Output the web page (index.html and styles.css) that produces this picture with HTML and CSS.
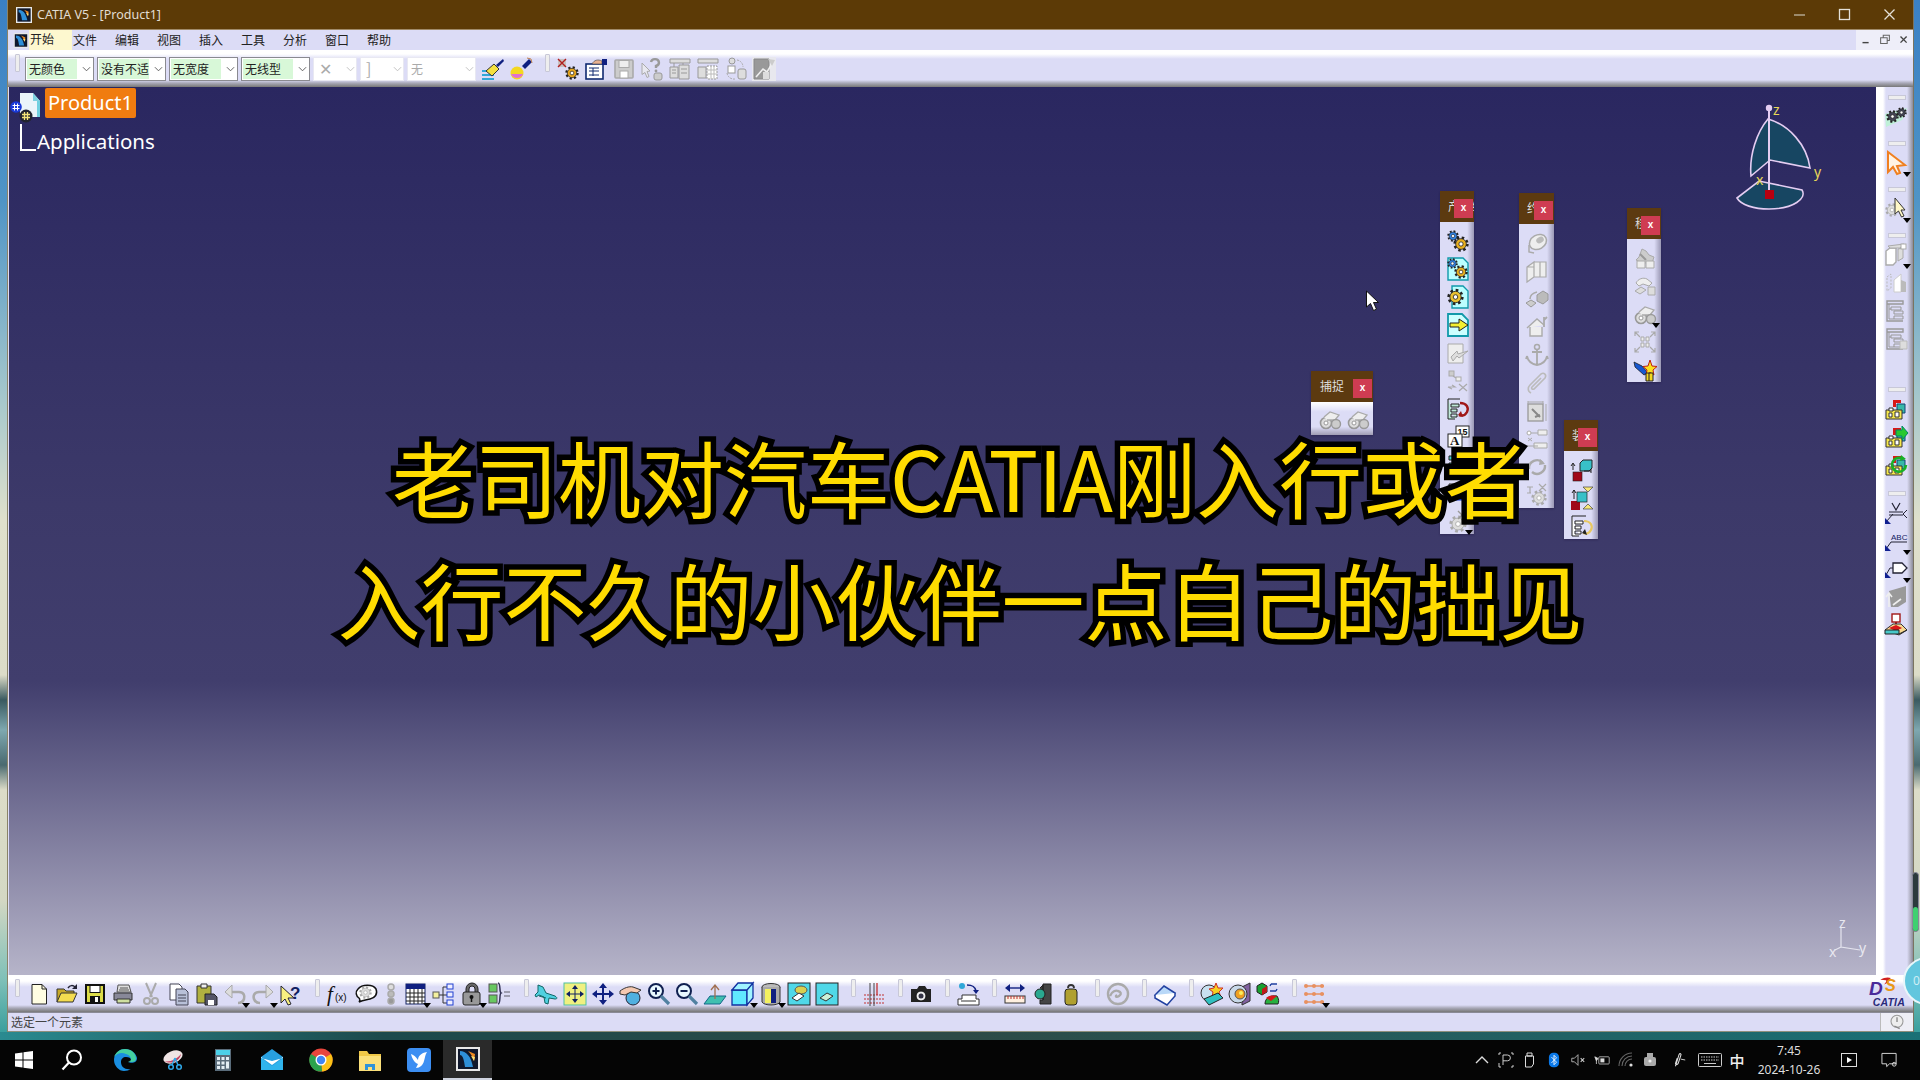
FILE: index.html
```html
<!DOCTYPE html>
<html lang="zh-CN">
<head>
<meta charset="utf-8">
<title>CATIA V5 - [Product1]</title>
<link rel="stylesheet" href="styles.css">
</head>
<body>
<svg class="defs" width="0" height="0">
  <symbol id="gear" viewBox="0 0 24 24"><circle cx="12" cy="12" r="9.5" fill="none" stroke="#222" stroke-width="4" stroke-dasharray="3.7 3.75"/><circle cx="12" cy="12" r="8" fill="currentColor" stroke="#222" stroke-width="1.2"/><circle cx="12" cy="12" r="3.2" fill="#fff" stroke="#222" stroke-width="1.2"/></symbol>
  <symbol id="ggear" viewBox="0 0 24 24"><circle cx="12" cy="12" r="9.5" fill="none" stroke="#aaa" stroke-width="4" stroke-dasharray="3.7 3.75"/><circle cx="12" cy="12" r="8" fill="#ddd" stroke="#aaa" stroke-width="1.2"/><circle cx="12" cy="12" r="3.2" fill="#fff" stroke="#aaa" stroke-width="1.2"/></symbol>
  <symbol id="cat" viewBox="0 0 24 24"><rect x="1" y="1" width="22" height="22" fill="#10182c" stroke="#e8e8e8" stroke-width="2"/><path d="M4 4c6 0 11 5 13 16H9C8 13 7 8 4 8z" fill="#2e8fd8"/><path d="M12 4l7 3-1 7c-1-4-3-7-6-10z" fill="#f08a20"/><path d="M15 9l4 1-1 4z" fill="#ffe070"/></symbol>
  <symbol id="tree" viewBox="0 0 24 24"><path d="M3 2h16v3H3zM3 5v17h16" fill="none" stroke="#999" stroke-width="1.4"/><path d="M7 8h10v3H7zM10 12h9v3h-9zM10 17h9v3h-9zM5 5v15h5M5 10h2" fill="none" stroke="#999"/></symbol>
  <symbol id="kit" viewBox="0 0 24 24"><path d="M9 3h8v3h-5v4H9z" fill="#d81818"/><path d="M13 7h8v9h-8z" fill="#38b8a8" stroke="#147"/><path d="M2 13h16v9H2z" fill="#f6e84c" stroke="#333"/><path d="M5 11h4v3H5zM5 16h3v4H5zM11 15h4v5h-4z" fill="#fff" stroke="#333"/></symbol>
  <symbol id="gbub" viewBox="0 0 24 24"><circle cx="8" cy="16" r="5.5" fill="#ddd" stroke="#999" stroke-width="1.6"/><circle cx="8" cy="16" r="2" fill="#fff" stroke="#999"/><path d="M6 10l6-5 9 3-4 5H9" fill="#eee" stroke="#aaa" stroke-width="1.3"/><circle cx="18" cy="17" r="4.5" fill="#ccc" stroke="#999" stroke-width="1.4"/></symbol>
</svg>

<div class="window">
  <header class="titlebar">
    <svg class="title-icon" viewBox="0 0 24 24"><use href="#cat"/></svg>
    <span class="title-text">CATIA V5 - [Product1]</span>
    <div class="win-btns">
      <svg viewBox="0 0 16 16"><path d="M2 8h11" stroke="#b8ae98" stroke-width="1.4"/></svg>
      <svg viewBox="0 0 16 16"><rect x="2.5" y="2.5" width="10" height="10" fill="none" stroke="#e4e0d8" stroke-width="1.3"/></svg>
      <svg viewBox="0 0 16 16"><path d="M2.5 2.5l10 10M12.5 2.5l-10 10" stroke="#e4e0d8" stroke-width="1.3"/></svg>
    </div>
  </header>

  <nav class="menubar">
    <span class="menu-start"><svg class="menu-logo" viewBox="0 0 24 24"><use href="#cat"/></svg><span class="start-label">开始</span></span>
    <span class="menu-item">文件</span><span class="menu-item">编辑</span><span class="menu-item">视图</span><span class="menu-item">插入</span><span class="menu-item">工具</span><span class="menu-item">分析</span><span class="menu-item">窗口</span><span class="menu-item">帮助</span>
    <div class="mdi-btns">
      <svg viewBox="0 0 16 16"><path d="M4 11h7" stroke="#444" stroke-width="1.6"/></svg>
      <svg viewBox="0 0 16 16"><path d="M6 5V2.5h7v6h-2.5M3 5.5h7.5V12H3z" fill="none" stroke="#666" stroke-width="1.2"/></svg>
      <svg viewBox="0 0 16 16"><path d="M4 4l7 7M11 4l-7 7" stroke="#444" stroke-width="1.6"/></svg>
    </div>
  </nav>

  <div class="toolbar top-bar">
    <i class="grip first"></i>
    <span class="combo"><span class="val">无颜色</span><svg class="chev" viewBox="0 0 10 6"><path d="M1 1l4 4 4-4" fill="none" stroke="#555"/></svg></span>
    <span class="combo"><span class="val">没有不适</span><svg class="chev" viewBox="0 0 10 6"><path d="M1 1l4 4 4-4" fill="none" stroke="#555"/></svg></span>
    <span class="combo"><span class="val">无宽度</span><svg class="chev" viewBox="0 0 10 6"><path d="M1 1l4 4 4-4" fill="none" stroke="#555"/></svg></span>
    <span class="combo"><span class="val">无线型</span><svg class="chev" viewBox="0 0 10 6"><path d="M1 1l4 4 4-4" fill="none" stroke="#555"/></svg></span>
    <span class="combo off small"><span class="val">✕</span><svg class="chev" viewBox="0 0 10 6"><path d="M1 1l4 4 4-4" fill="none" stroke="#bbb"/></svg></span>
    <span class="combo off small"><span class="val">]</span><svg class="chev" viewBox="0 0 10 6"><path d="M1 1l4 4 4-4" fill="none" stroke="#bbb"/></svg></span>
    <span class="combo off"><span class="val">无</span><svg class="chev" viewBox="0 0 10 6"><path d="M1 1l4 4 4-4" fill="none" stroke="#bbb"/></svg></span>
    <span class="b"><svg viewBox="0 0 24 24"><path d="M1 14h12M1 18h12M1 22h12" stroke="#30a8d8" stroke-width="2.2"/><path d="M5 14l8-7 5 5-7 7z" fill="#f4e040" stroke="#333"/><path d="M15 8l7-6 1 2-6 6z" fill="#102080"/></svg></span>
    <span class="b"><svg viewBox="0 0 24 24"><circle cx="8" cy="16" r="6.5" fill="#f4d820"/><path d="M2 17a6.5 6.500 0 0 0 12 0z" fill="#e070d0"/><path d="M13 9l7-7 3 3-7 7z" fill="#102080"/><path d="M18 1l4 1 1 4" fill="none" stroke="#c08050"/></svg></span>
    <i class="grip"></i>
    <span class="b"><svg viewBox="0 0 24 24"><path d="M2 2h8v8H2z" fill="#c8c0c0"/><path d="M2 2l8 8M10 2l-8 8" stroke="#b02020" stroke-width="1.4"/><use href="#gear" x="9" y="9" width="14" height="14" color="#e8a820"/></svg></span>
    <span class="b"><svg viewBox="0 0 24 24"><rect x="2" y="7" width="17" height="15" fill="#fff" stroke="#102a70" stroke-width="1.6"/><path d="M5 11h10M5 14h10M5 18h10M9 11v8" stroke="#102a70"/><path d="M8 7c2-4 6-5 10-3v3z" fill="#e8b090" stroke="#555" stroke-width=".7"/><path d="M18 2h5v6h-5z" fill="#102080"/></svg></span>
    <span class="b"><svg viewBox="0 0 24 24"><rect x="3" y="3" width="18" height="18" rx="1" fill="#ccc" stroke="#aaa" stroke-width="1.6"/><rect x="7" y="3.500" width="10" height="7" fill="#eee" stroke="#aaa"/><rect x="8" y="14" width="8" height="7" fill="#fff" stroke="#aaa"/></svg></span>
    <span class="b"><svg viewBox="0 0 24 24"><path d="M2 6l8 8-3 .5 2 5-2 1-2-5-3 2z" fill="#e8e8f0" stroke="#aaa"/><path d="M11 5a4 3.500 0 1 1 5 4v2" fill="none" stroke="#999" stroke-width="2.400"/><circle cx="16" cy="14" r="1.400" fill="#999"/><rect x="14" y="16" width="8" height="7" rx="2" fill="#ccc" stroke="#999"/></svg></span>
    <span class="b"><svg viewBox="0 0 24 24"><path d="M2 2h20v4H2zM2 10h8v11H2zM11 8h10v14H11z" fill="#ddd" stroke="#999"/><path d="M4 13h4M4 16h4M13 12h6M13 16h6" stroke="#999"/><path d="M6 6v4M15 6v2" stroke="#999"/></svg></span>
    <span class="b"><svg viewBox="0 0 24 24"><path d="M2 2h20v4H2zM2 10h8v11H2z" fill="#ddd" stroke="#999"/><path d="M11 9h10v13H11z" fill="#fff" stroke="#999" stroke-dasharray="2 1"/><path d="M15 9v13M18 9v13M11 13h10M11 17h10" stroke="#bbb"/></svg></span>
    <span class="b"><svg viewBox="0 0 24 24"><circle cx="8" cy="4" r="3" fill="#ddd" stroke="#999"/><rect x="4" y="9" width="7" height="7" fill="#fff" stroke="#999"/><rect x="14" y="12" width="8" height="10" rx="2" fill="#ddd" stroke="#999"/><path d="M13 3a7 7 0 0 1 6 7M3 16a7 7 0 0 0 8 6" fill="none" stroke="#aaa" stroke-dasharray="2 1"/></svg></span>
    <span class="b graybox"><svg viewBox="0 0 24 24"><path d="M2 2h15v20H2z" fill="#999" stroke="#888"/><path d="M4 20l7-8 4 3 6-10" fill="none" stroke="#eee" stroke-width="1.600"/><path d="M16 2l7 1-3 6z" fill="#ccc"/><rect x="11" y="15" width="6" height="7" fill="#ddd"/></svg></span>
  </div>

  <div class="main">
    <section class="viewport">
      <div class="tree">
        <div class="tree-root">
          <svg class="root-icon" viewBox="0 0 33 36"><path d="M8 2h13l7 8v16H8z" fill="#eaf4fa"/><path d="M21 2v8h7z" fill="#7fd0e0"/><path d="M25 10h3v16h-3z" fill="#70d0e0"/><circle cx="4" cy="16" r="5.800" fill="#1a3ad8"/><path d="M2.500 12.500v7M5.500 12.500v7M.5 14.500h7M.5 17.500h7" stroke="#fff"/><circle cx="14" cy="25" r="6.500" fill="#22242e"/><path d="M12.500 21v8M15.500 21v8M10 23.500h8M10 26.500h8" stroke="#f4e478" stroke-width="1.300"/></svg>
          <span class="root-label">Product1</span>
        </div>
        <div class="tree-child"><i class="branch"></i><span class="child-label">Applications</span></div>
      </div>

      <svg class="gizmo" viewBox="1730 100 95 115">
        <path d="M1769 119C1790 125 1808 145 1811 168L1771 160 1752 176C1750 155 1758 132 1769 119Z" fill="#174662" stroke="#e4cdf2" stroke-width="1.600"/>
        <path d="M1738 198L1760 181 1803 190C1808 198 1795 209 1770 209 1755 209 1742 205 1738 198Z" fill="#174662" stroke="#e4cdf2" stroke-width="1.600"/>
        <path d="M1770 108V192" stroke="#e4cdf2" stroke-width="2"/>
        <circle cx="1770" cy="108" r="3.200" fill="#e4cdf2"/>
        <rect x="1766" y="190" width="9" height="9" fill="#b80010"/>
        <text x="1774" y="115" class="giz-t">z</text><text x="1815" y="177" class="giz-t">y</text><text x="1757" y="185" class="giz-t">x</text>
      </svg>

      <svg class="axis" viewBox="1825 915 50 45">
        <path d="M1842 927V947L1861 950M1842 947L1836 950" fill="none" stroke="#e4e4ee" stroke-width="1.200"/>
        <text x="1840" y="928" class="axis-t">z</text><text x="1860" y="953" class="axis-t">y</text><text x="1830" y="957" class="axis-t">x</text>
      </svg>

      <svg class="pointer" viewBox="0 0 14 22"><path d="M1.500 1v16l4-3.500 3 7 3-1.300-3-6.700h5z" fill="#fff" stroke="#111"/></svg>

      <div class="float ft-a">
        <div class="ft-title"><span class="ft-name">捕捉</span><span class="ft-x">x</span></div>
        <div class="ft-body row">
          <span class="b"><svg viewBox="0 0 24 24"><use href="#gbub"/></svg></span>
          <span class="b"><svg viewBox="0 0 24 24"><use href="#gbub"/></svg></span>
        </div>
      </div>

      <div class="float ft-b">
        <div class="ft-title"><span class="ft-name">产品结构</span><span class="ft-x">x</span></div>
        <div class="ft-body">
          <span class="b"><svg viewBox="0 0 24 24"><use href="#gear" x="1" y="1" width="12" height="12" color="#3080e0"/><use href="#gear" x="7" y="7" width="16" height="16" color="#e8b020"/></svg></span>
          <span class="b"><svg viewBox="0 0 24 24"><path d="M2 1h15l5 5v17H2z" fill="#bff" stroke="#19a" stroke-width="1.400"/><use href="#gear" x="1" y="1" width="11" height="11" color="#3080e0"/><use href="#gear" x="8" y="8" width="14" height="14" color="#e8b020"/></svg></span>
          <span class="b"><svg viewBox="0 0 24 24"><path d="M6 1h11l5 5v17H6z" fill="#bff" stroke="#19a" stroke-width="1.400"/><use href="#gear" x="1" y="3" width="17" height="18" color="#e8c030"/></svg></span>
          <span class="b"><svg viewBox="0 0 24 24"><path d="M2 1h14l6 6v16H2z" fill="#cff" stroke="#19a" stroke-width="1.800"/><path d="M4 10h9V6l9 6-9 6v-4H4z" fill="#f4ee30" stroke="#222"/></svg></span>
          <span class="b"><svg viewBox="0 0 24 24"><path d="M2 3h15v19H2z" fill="#eee" stroke="#aaa"/><path d="M5 16l6-6 1 3 10-3-9 7-2-2-4 5z" fill="#ddd" stroke="#aaa"/></svg></span>
          <span class="b"><svg viewBox="0 0 24 24"><rect x="3" y="2" width="5" height="5" fill="#ccc" stroke="#aaa"/><rect x="10" y="8" width="5" height="4" fill="#eee" stroke="#aaa"/><path d="M7 7l3 2M2 18h7l-3-2M2 18l4 2M13 15l8 7M21 15l-8 7" fill="none" stroke="#aaa" stroke-width="1.200"/></svg></span>
          <span class="b"><svg viewBox="0 0 24 24"><path d="M2 2h12M2 2v20h7M5 7h8v3H5zM5 12h6v3H5zM5 17h6v3H5z" fill="#bfe8d8" stroke="#222"/><path d="M14 6c7 0 9 5 7 9s-5 4-8 3" fill="none" stroke="#a01818" stroke-width="2.400"/><path d="M15 14l-3 4 5 2z" fill="#a01818"/></svg></span>
          <span class="b"><svg viewBox="0 0 24 24"><rect x="10" y="1" width="13" height="11" fill="#fff" stroke="#222"/><text x="11.500" y="10" class="ic-t">15</text><rect x="2" y="9" width="14" height="13" fill="#fff" stroke="#222"/><text x="4" y="20" class="ic-b">A</text></svg></span>
          <span class="b"><svg viewBox="0 0 24 24"><path d="M3 3h10v4H3zM3 10h14v4H3zM3 17h14v4H3z" fill="#4cc" stroke="#222"/></svg></span>
          <span class="b"><svg viewBox="0 0 24 24"><path d="M3 3h10v4H3zM3 10h14v4H3z" fill="#ccd" stroke="#222"/><path d="M3 18h16" stroke="#1030c0" stroke-width="3"/></svg></span>
          <span class="b more"><svg viewBox="0 0 24 24"><use href="#ggear" x="3" y="6" width="18" height="18"/><path d="M12 2l8 8M20 2l-8 8" stroke="#999" stroke-width="1.400"/></svg></span>
        </div>
      </div>

      <div class="float ft-c">
        <div class="ft-title"><span class="ft-name">约束</span><span class="ft-x">x</span></div>
        <div class="ft-body">
          <span class="b"><svg viewBox="0 0 24 24"><ellipse cx="13" cy="11" rx="9" ry="7" fill="#eee" stroke="#aaa" stroke-width="1.500" transform="rotate(-30 13 11)"/><ellipse cx="15" cy="9" rx="4" ry="3" fill="#bbb" transform="rotate(-30 15 9)"/><path d="M4 14v7l5 1" fill="none" stroke="#aaa" stroke-width="1.500"/></svg></span>
          <span class="b"><svg viewBox="0 0 24 24"><path d="M2 8l7-5v15l-7 5zM9 3h12v15H9zM15 3v15M2 8h7" fill="#eee" stroke="#aaa" stroke-width="1.200"/></svg></span>
          <span class="b"><svg viewBox="0 0 24 24"><path d="M12 8l6-4 5 3v6l-5 4-6-3z" fill="#bbb" stroke="#999"/><path d="M1 16l5-3 5 3-5 4z" fill="#ccc" stroke="#999"/><path d="M5 12c0-4 3-6 7-7" fill="none" stroke="#aaa" stroke-width="1.600"/></svg></span>
          <span class="b"><svg viewBox="0 0 24 24"><path d="M2 13l10-9 7 6M5 12v9h12v-9" fill="#eee" stroke="#aaa" stroke-width="1.400"/><path d="M19 2v10M22 2l-3 3" stroke="#aaa" stroke-width="1.800"/></svg></span>
          <span class="b"><svg viewBox="0 0 24 24"><circle cx="12" cy="4" r="2.500" fill="none" stroke="#aaa" stroke-width="1.500"/><path d="M12 6v16M7 9h10M2 13c1 6 5 8 10 9 5-1 9-3 10-9M2 13l-1 3M22 13l1 3" fill="none" stroke="#aaa" stroke-width="1.800"/></svg></span>
          <span class="b"><svg viewBox="0 0 24 24"><path d="M6 22c-4-2-3-6-1-8L16 3c3-2 6 1 4 4L9 18c-2 1-3-1-2-2L16 7" fill="none" stroke="#bbb" stroke-width="1.600"/></svg></span>
          <span class="b"><svg viewBox="0 0 24 24"><rect x="3" y="5" width="15" height="17" fill="#ddd" stroke="#999" stroke-width="1.300"/><path d="M3 2v3M18 2v3M21 5v17M3 3h15" fill="none" stroke="#aaa"/><path d="M7 10l8 8M10 18l5-2" stroke="#888" stroke-width="2"/></svg></span>
          <span class="b"><svg viewBox="0 0 24 24"><path d="M2 6h11M2 19h11M13 3h9v5h-9zM9 16h13v5H9z" fill="#eee" stroke="#aaa"/><circle cx="4" cy="6" r="2" fill="#fff" stroke="#aaa"/><path d="M3 11l4 3M7 11l-4 3" stroke="#aaa"/></svg></span>
          <span class="b"><svg viewBox="0 0 24 24"><path d="M4 14a8 8 0 0 1 14-6" fill="none" stroke="#aaa" stroke-width="2.400"/><path d="M20 10a8 8 0 0 1-13 7" fill="none" stroke="#aaa" stroke-width="2.400"/><path d="M15 4l5 5-6 1z" fill="#aaa"/></svg></span>
          <span class="b"><svg viewBox="0 0 24 24"><use href="#ggear" x="6" y="7" width="16" height="16"/><path d="M14 1l7 7M21 1l-7 7M2 4h6M2 10h4M5 4v6" stroke="#aaa" stroke-width="1.200" fill="none"/></svg></span>
        </div>
      </div>

      <div class="float ft-d">
        <div class="ft-title"><span class="ft-name">移动</span><span class="ft-x">x</span></div>
        <div class="ft-body">
          <span class="b"><svg viewBox="0 0 24 24"><path d="M9 3l4 2 3 4 5 2-2 6H9l-6-3 3-3z" fill="#ccc" stroke="#aaa"/><path d="M4 15h8v7H4zM13 15h8v7h-8z" fill="#eee" stroke="#aaa"/><path d="M7 8l6 6" stroke="#999" stroke-width="2"/></svg></span>
          <span class="b"><svg viewBox="0 0 24 24"><path d="M3 9c2-4 7-6 11-4l5 4-3 3-6-2-4 2z" fill="#eee" stroke="#aaa"/><path d="M2 17l6-4 5 3-6 4zM15 13h7v8h-7z" fill="#ddd" stroke="#aaa"/></svg></span>
          <span class="b more"><svg viewBox="0 0 24 24"><use href="#gbub"/></svg></span>
          <span class="b"><svg viewBox="0 0 24 24"><path d="M2 2l5 5M22 2l-5 5M2 22l5-5M22 22l-5-5M2 6V2h4M22 6V2h-4M2 18v4h4M22 18v4h-4" fill="none" stroke="#aaa" stroke-width="1.200"/><path d="M8 7h3v4H8zM13 7h3v4h-3zM8 13h3v4H8zM13 13h3v4h-3z" fill="#eee" stroke="#aaa"/></svg></span>
          <span class="b"><svg viewBox="0 0 24 24"><path d="M1 4l8 4 6 7-4 2-9-8z" fill="#1858d0" stroke="#111" stroke-width=".7"/><path d="M17 2l2 6 5 .5-4 3.500 1 5-4-2.500-4 2.500 1-5-4-3.500 5-.5z" fill="#f8e020" stroke="#c02010"/><path d="M13 15h7v8h-7z" fill="#f4d820" stroke="#222"/><path d="M16 15v8" stroke="#222"/></svg></span>
        </div>
      </div>

      <div class="float ft-e">
        <div class="ft-title"><span class="ft-name">装配</span><span class="ft-x">x</span></div>
        <div class="ft-body">
          <span class="b"><svg viewBox="0 0 24 24"><rect x="3" y="14" width="9" height="9" fill="#a00818" stroke="#222" stroke-width=".6"/><path d="M10 5l3-3h9v8l-3 3h-9z" fill="#38c0c8" stroke="#222"/><path d="M14 13h7M21 11v4M3 6v6M1 8l2-3 2 3" fill="none" stroke="#222"/></svg></span>
          <span class="b"><svg viewBox="0 0 24 24"><rect x="1" y="15" width="9" height="9" fill="#a00818"/><rect x="7" y="6" width="10" height="10" fill="#38c0c8" stroke="#222" stroke-width=".7"/><path d="M13 1h10l-5 5zM13 23h10l-5-5z" fill="#f8e878" stroke="#444" stroke-width=".7"/><path d="M4 4v9M2 7l2-3 2 3" fill="none" stroke="#222"/></svg></span>
          <span class="b"><svg viewBox="0 0 24 24"><path d="M2 2h14M2 2v20h7M5 7h8v3H5zM5 12h6v3H5zM5 17h6v3H5z" fill="#fff" stroke="#222"/><path d="M14 7c7 0 9 5 7 9s-5 4-8 3" fill="none" stroke="#e8c860" stroke-width="2.200"/><path d="M15 15l-3 4 5 2z" fill="#222"/></svg></span>
        </div>
      </div>
    </section>

    <aside class="sidebar">
      <div class="vgroup first"><i class="vgrip"></i>
        <span class="b"><svg viewBox="0 0 24 24"><path d="M1 9l22-6-5 12L2 22z" fill="#bff0d8"/><use href="#gear" x="2" y="5" width="13" height="13" color="#445"/><use href="#gear" x="12" y="2" width="11" height="11" color="#445"/></svg></span>
      </div>
      <div class="vgroup"><i class="vgrip"></i>
        <span class="b more"><svg viewBox="0 0 24 24"><path d="M4 1v20l5-5 4 7 3-1-3-7 8-1z" fill="#fff4e4" stroke="#f08020" stroke-width="2"/></svg></span>
      </div>
      <div class="vgroup"><i class="vgrip"></i>
        <span class="b more"><svg viewBox="0 0 24 24"><use href="#ggear" x="1" y="6" width="14" height="14"/><path d="M11 1v16l3.500-3 3 6 2.500-1-3-6h4z" fill="#fff8c8" stroke="#333"/></svg></span>
      </div>
      <div class="vgroup"><i class="vgrip"></i>
        <span class="b more"><svg viewBox="0 0 24 24"><path d="M2 8l4-3h6v14l-3 3H2z" fill="#fff" stroke="#aaa" stroke-width="1.400"/><path d="M4 3l16-2-4 4H6zM14 6l5-1v10l-5 3z" fill="#ddd" stroke="#aaa"/><rect x="17" y="1" width="5" height="5" fill="#fff" stroke="#aaa"/></svg></span>
        <span class="b"><svg viewBox="0 0 24 24"><path d="M3 6l4-3v14l-4 3z" fill="none" stroke="#bbb" stroke-dasharray="2 1.500"/><path d="M10 9l7-6v18h-7z" fill="#fff" stroke="#ccc"/><path d="M17 9l5 2v10h-5z" fill="#bbb"/></svg></span>
        <span class="b"><svg viewBox="0 0 24 24"><use href="#tree"/></svg></span>
        <span class="b"><svg viewBox="0 0 24 24"><use href="#tree"/><path d="M16 14h7v8h-7z" fill="#ddd" stroke="#bbb"/></svg></span>
      </div>
      <div class="vgroup far"><i class="vgrip"></i>
        <span class="b"><svg viewBox="0 0 24 24"><use href="#kit"/></svg></span>
        <span class="b"><svg viewBox="0 0 24 24"><use href="#kit"/><path d="M12 5h6V1l6 7-6 7v-4h-6z" fill="#28c830" stroke="#086"/></svg></span>
        <span class="b"><svg viewBox="0 0 24 24"><use href="#kit"/><path d="M22 12a7 7 0 1 1-3-6" fill="none" stroke="#18b028" stroke-width="2.600"/><path d="M17 2l5 4-6 2z" fill="#18b028"/></svg></span>
      </div>
      <div class="vgroup near"><i class="vgrip"></i>
        <span class="b"><svg viewBox="0 0 24 24"><path d="M8 2l4 7 4-7M5 11h14M5 14h14" fill="none" stroke="#223" stroke-width="1.200"/><path d="M23 9l-4 4 4 4M9 13l-7 8" fill="none" stroke="#223"/><path d="M1 17v6h6z" fill="#102090"/></svg></span>
        <span class="b more"><svg viewBox="0 0 24 24"><text x="7" y="11" class="ic-abc">ABC</text><path d="M7 13h16M7 13l-5 7" fill="none" stroke="#223"/><path d="M1 16v6h6z" fill="#102090"/></svg></span>
        <span class="b more"><svg viewBox="0 0 24 24"><path d="M9 6h9l5 5-5 5H9z" fill="#fff" stroke="#223" stroke-width="1.300"/><path d="M9 11H6l-4 7" fill="none" stroke="#223"/><path d="M1 15v6h6z" fill="#102090"/></svg></span>
        <span class="b"><svg viewBox="0 0 24 24"><path d="M5 6l17-5v16l-8 5H7z" fill="#999"/><path d="M5 9v13M2 12l3-4 3 4M9 20l8-6" fill="none" stroke="#eee" stroke-width="1.600"/></svg></span>
        <span class="b"><svg viewBox="0 0 24 24"><rect x="8" y="1" width="8" height="8" fill="#fff" stroke="#a01818" stroke-width="1.400"/><path d="M12 9v5" stroke="#a01818" stroke-width="2"/><path d="M1 17l8-6h8l6 6-8 5z" fill="#f8d890" stroke="#333"/><path d="M5 15l7-3 6 3-6 3z" fill="#d81818"/><path d="M1 17v4h14v-4zM15 21l8-4" fill="#48c8c8" stroke="#222"/></svg></span>
      </div>
      <div class="ds-logo"><svg viewBox="0 0 40 20"><path d="M14 3c4-3 9-3 11-2l-2 3c-2 3-5 4-5 4 2-2 3-4 2-4.500z" fill="#d02020"/><text x="2" y="19" class="ds-d">D</text><text x="19" y="15" class="ds-s">S</text></svg><span class="ds-cat">CATIA</span></div>
    </aside>
  </div>

  <div class="toolbar bottom-bar">
    <i class="grip first"></i>
    <span class="b"><svg viewBox="0 0 24 24"><path d="M5 2.500h10l4.500 4.500v15H5z" fill="#fffde2" stroke="#222"/><path d="M15 2.500V7h4.500" fill="none" stroke="#222"/></svg></span>
    <span class="b"><svg viewBox="0 0 24 24"><path d="M2 20V7h7l2 2h8v3" fill="#c8a828" stroke="#333"/><path d="M2 20l4-9h16l-4 9z" fill="#f4dc50" stroke="#333"/><path d="M13 6c2-3 5-3 7-1" fill="none" stroke="#223" stroke-width="1.500"/><path d="M22 2v5h-5z" fill="#223"/></svg></span>
    <span class="b"><svg viewBox="0 0 24 24"><rect x="3" y="3" width="18" height="18" fill="#dcdc48" stroke="#111" stroke-width="2"/><rect x="7" y="3.500" width="10" height="7" fill="#fff" stroke="#111"/><rect x="7" y="14" width="10" height="7" fill="#111"/><rect x="12" y="15" width="3" height="5" fill="#fff"/></svg></span>
    <span class="b"><svg viewBox="0 0 24 24"><path d="M7 3h11l2 7H6z" fill="#ddd" stroke="#555"/><path d="M3 11h18v7H3z" fill="#889" stroke="#333"/><path d="M6 17h13v4H6z" fill="#cfe0a0" stroke="#333"/><path d="M9 6h8M8 8h10" stroke="#555"/></svg></span>
    <span class="b"><svg viewBox="0 0 24 24"><path d="M7 1l6 14M17 1L11 15" stroke="#aaa" stroke-width="2"/><circle cx="8" cy="19" r="3" fill="none" stroke="#aaa" stroke-width="2"/><circle cx="16" cy="19" r="3" fill="none" stroke="#aaa" stroke-width="2"/></svg></span>
    <span class="b"><svg viewBox="0 0 24 24"><path d="M3 2h9l3 3v13H3z" fill="#fff" stroke="#445"/><path d="M9 7h9l3 3v13H9z" fill="#b8c0d8" stroke="#445"/><path d="M11 13h8M11 16h8M11 19h8" stroke="#445"/></svg></span>
    <span class="b"><svg viewBox="0 0 24 24"><path d="M2 4h14v17H2z" fill="#b0b040" stroke="#333"/><path d="M6 2h6v4H6z" fill="#eee" stroke="#333"/><path d="M10 12h9l3 3v8H10z" fill="#556" stroke="#222"/><path d="M13 18h6v5h-6z" fill="#fff"/></svg></span>
    <span class="b more"><svg viewBox="0 0 24 24"><path d="M6 10h10c5 0 6 4 5 7s-4 4-6 4" fill="none" stroke="#aaa" stroke-width="2.600"/><path d="M2 10l7-7v13z" fill="#ddd" stroke="#aaa"/></svg></span>
    <span class="b more"><svg viewBox="0 0 24 24"><path d="M18 10H8c-5 0-6 4-5 7s4 4 6 4" fill="none" stroke="#aaa" stroke-width="2.600"/><path d="M22 10l-7-7v13z" fill="#ddd" stroke="#aaa"/></svg></span>
    <span class="b"><svg viewBox="0 0 24 24"><path d="M2 4v17l4-4 3 6 3-1-3-6h6z" fill="#f8f080" stroke="#223"/><text x="11" y="17" class="ic-q">?</text></svg></span>
    <i class="grip"></i>
    <span class="b"><svg viewBox="0 0 24 24"><text x="1" y="19" class="ic-f">f</text><text x="9" y="19" class="ic-fx">(x)</text></svg></span>
    <span class="b"><svg viewBox="0 0 24 24"><path d="M5 20c1-1 1-3 0-4-3-2-4-6-1-9 4-5 15-5 18 0 2 5-1 9-6 10-4 1-7 1-11 3z" fill="#fff" stroke="#111" stroke-width="1.500"/><use href="#ggear" x="5" y="4" width="13" height="13"/></svg></span>
    <span class="b narrow"><svg viewBox="0 0 24 24"><circle cx="12" cy="5" r="3" fill="#ddd" stroke="#aaa" stroke-width="1.500"/><circle cx="12" cy="12" r="3" fill="#bbb" stroke="#aaa" stroke-width="1.500"/><circle cx="12" cy="19" r="3" fill="#999" stroke="#aaa" stroke-width="1.500"/></svg></span>
    <span class="b more"><svg viewBox="0 0 24 24"><rect x="2" y="2" width="19" height="20" fill="#fff" stroke="#102060"/><rect x="2" y="2" width="19" height="5" fill="#102080"/><path d="M6 7v15M10 7v15M14 7v15M18 7v15M2 11h19M2 15h19M2 19h19" stroke="#222"/></svg></span>
    <span class="b"><svg viewBox="0 0 24 24"><path d="M7 13h4M11 5v16M11 5h4M11 13h4M11 21h4" fill="none" stroke="#333"/><rect x="1" y="10" width="6" height="6" fill="#f4f0a0" stroke="#555"/><rect x="15" y="2" width="6" height="5" fill="#eef" stroke="#2040d0"/><rect x="15" y="10" width="6" height="5" fill="#eef" stroke="#2040d0"/><rect x="15" y="18" width="6" height="5" fill="#eef" stroke="#2040d0"/></svg></span>
    <span class="b more"><svg viewBox="0 0 24 24"><path d="M6 11V7a6 6 0 0 1 12 0v4h-3V7a3 3 0 0 0-6 0v4z" fill="#666" stroke="#222"/><rect x="3" y="10" width="17" height="13" rx="2" fill="#999" stroke="#222"/><circle cx="11.500" cy="15" r="2" fill="#111"/><path d="M11.500 15v5" stroke="#111" stroke-width="1.500"/></svg></span>
    <span class="b"><svg viewBox="0 0 24 24"><rect x="1" y="2" width="8" height="8" fill="#68c860" stroke="#555"/><rect x="1" y="13" width="8" height="8" fill="#68c860" stroke="#555"/><path d="M10 1c3 0 1 9 3 10-2 1 0 11-3 11" fill="none" stroke="#335" stroke-width="1.500"/><path d="M16 10h6M16 14h6" stroke="#889" stroke-width="1.500"/></svg></span>
    <i class="grip"></i>
    <span class="b"><svg viewBox="0 0 24 24"><path d="M3 3l5 2 3 6 9 3c3 2 2 3 0 3l-6-1-1 6-3-1-1-6-5-2-3 2-1-2 3-3z" fill="#50d0e0" stroke="#166"/><path d="M4 14l7 2" stroke="#166"/></svg></span>
    <span class="b"><svg viewBox="0 0 24 24"><rect x="1" y="1" width="22" height="22" fill="#f0f080" stroke="#50c0a0"/><path d="M12 3l3 4H9zM12 21l3-4H9zM3 12l4-3v6zM21 12l-4-3v6z" fill="#102060"/><path d="M12 6v12M6 12h12" stroke="#102060"/></svg></span>
    <span class="b"><svg viewBox="0 0 24 24"><path d="M12 1l4 5h-8zM12 23l4-5h-8zM1 12l5-4v8zM23 12l-5-4v8z" fill="#102080"/><path d="M12 5v14M5 12h14" stroke="#102080" stroke-width="2"/></svg></span>
    <span class="b"><svg viewBox="0 0 24 24"><circle cx="14" cy="16" r="7" fill="#50b0e0" stroke="#223"/><path d="M1 9c4-3 9-5 13-4l8 3-4 3-6-1-6 3-5-1z" fill="#f4c8b0" stroke="#333"/></svg></span>
    <span class="b"><svg viewBox="0 0 24 24"><circle cx="9" cy="9" r="7" fill="#e8f8ff" stroke="#102050" stroke-width="2"/><path d="M5.500 9h7M9 5.500v7" stroke="#102050" stroke-width="2"/><path d="M14 14l8 8" stroke="#5080a0" stroke-width="3.200"/></svg></span>
    <span class="b"><svg viewBox="0 0 24 24"><circle cx="9" cy="9" r="7" fill="#e8f8ff" stroke="#102050" stroke-width="2"/><path d="M5.500 9h7" stroke="#102050" stroke-width="2"/><path d="M14 14l8 8" stroke="#5080a0" stroke-width="3.200"/></svg></span>
    <span class="b"><svg viewBox="0 0 24 24"><path d="M1 22l6-8h16l-6 8z" fill="#40c0b0" stroke="#168"/><path d="M12 17V4M8 8l4-5 4 5" fill="none" stroke="#a07050" stroke-width="1.300"/></svg></span>
    <span class="b more"><svg viewBox="0 0 24 24"><path d="M1 8h15v15H1z" fill="#60e8ff" stroke="#1030a0" stroke-width="1.300"/><path d="M1 8l6-7h15L16 8zM16 8l6-7v15l-6 7z" fill="#a0f4ff" stroke="#1030a0" stroke-width="1.300"/></svg></span>
    <span class="b more"><svg viewBox="0 0 24 24"><ellipse cx="12" cy="5" rx="9" ry="3.500" fill="#bbb" stroke="#333"/><path d="M3 5v15c2 4 16 4 18 0V5" fill="#aaa" stroke="#333"/><rect x="6" y="7" width="6" height="14" fill="#f4f060"/><rect x="12" y="7" width="5" height="14" fill="#102080"/></svg></span>
    <span class="b"><svg viewBox="0 0 24 24"><rect x="1" y="1" width="22" height="22" fill="#50d8e8" stroke="#222"/><ellipse cx="14" cy="8" rx="6" ry="4" fill="#d8d050" stroke="#555"/><path d="M5 16l7-5 5 3-7 5z" fill="#fff" stroke="#333"/></svg></span>
    <span class="b"><svg viewBox="0 0 24 24"><rect x="1" y="1" width="22" height="22" fill="#50d8e8" stroke="#222"/><path d="M5 16l7-5 6 3-7 5z" fill="#ccf0d8" stroke="#333"/></svg></span>
    <i class="grip"></i>
    <span class="b"><svg viewBox="0 0 24 24"><path d="M2 13h21M2 17h21M2 21h21" stroke="#c03030" stroke-dasharray="2 1"/><path d="M8 1v23M12 1v23" stroke="#444"/><path d="M15 1v12" stroke="#c02020" stroke-width="1.200"/></svg></span>
    <i class="grip"></i>
    <span class="b"><svg viewBox="0 0 24 24"><path d="M2 7h6l2-3h6l2 3h4v13H2z" fill="#222"/><circle cx="12" cy="14" r="5" fill="#eee" stroke="#111"/><circle cx="12" cy="14" r="2.500" fill="#334"/></svg></span>
    <i class="grip"></i>
    <span class="b"><svg viewBox="0 0 24 24"><circle cx="6" cy="4" r="3" fill="#30a8d8"/><path d="M11 3c5 0 8 1 9 6" fill="none" stroke="#102080" stroke-width="1.600"/><path d="M17 8h6l-3 4z" fill="#102080"/><path d="M6 13h14v4h3v6H2v-6h4z" fill="#fff" stroke="#333"/><path d="M5 19h15" stroke="#333"/></svg></span>
    <i class="grip"></i>
    <span class="b"><svg viewBox="0 0 24 24"><path d="M5 6h14" stroke="#102080" stroke-width="1.400"/><path d="M2 6l5-4v8zM22 6l-5-4v8z" fill="#102080"/><rect x="2" y="14" width="20" height="7" fill="#fff0e0" stroke="#333"/><path d="M5 14v3M8 14v3M11 14v3M14 14v3M17 14v3M20 14v3" stroke="#c03030"/></svg></span>
    <span class="b"><svg viewBox="0 0 24 24"><path d="M12 2h8v20H9v-4h3zM9 6l3-3v15" fill="#444" stroke="#222"/><circle cx="9" cy="12" r="5" fill="#2aa890" stroke="#222"/></svg></span>
    <span class="b"><svg viewBox="0 0 24 24"><path d="M9 6a3 3 0 1 1 6 0" fill="none" stroke="#333" stroke-width="1.800"/><rect x="6" y="7" width="12" height="16" rx="3" fill="#b0a030" stroke="#222"/></svg></span>
    <i class="grip"></i>
    <span class="b"><svg viewBox="0 0 24 24"><circle cx="12" cy="12" r="10" fill="none" stroke="#aaa" stroke-width="2.400"/><path d="M4 14c2-5 6-6 8-5 3 1 4 3 1 5s-4 0-2-1" fill="none" stroke="#aaa" stroke-width="2.400"/></svg></span>
    <i class="grip"></i>
    <span class="b"><svg viewBox="0 0 24 24"><path d="M2 13l9-9 11 7-8 9z" fill="#b8d8f8" stroke="#2040a0" stroke-width="1.500"/><path d="M2 13v3l12 7 8-9v-3" fill="#fff" stroke="#2040a0" stroke-width="1.500"/></svg></span>
    <i class="grip"></i>
    <span class="b"><svg viewBox="0 0 24 24"><circle cx="9" cy="11" r="8" fill="#c8e0f0" stroke="#333"/><path d="M16 1l2 5 5 0-4 4 2 5-5-3-4 3 1-5-4-3 5-1z" fill="#f8d020" stroke="#d03020"/><path d="M4 17l14-6 5 5-14 7z" fill="#30c0c0" stroke="#222"/></svg></span>
    <span class="b"><svg viewBox="0 0 24 24"><path d="M14 5l8-4v18l-8 4z" fill="#8060a0" stroke="#333"/><circle cx="10" cy="12" r="9" fill="#c8d8e8" stroke="#333"/><circle cx="12" cy="12" r="5" fill="#f0a020" stroke="#555"/><circle cx="13" cy="11" r="2" fill="#f8f060"/></svg></span>
    <span class="b"><svg viewBox="0 0 24 24"><path d="M1 4l5-3 5 3v6l-5 3-5-3z" fill="#18a030" stroke="#222"/><path d="M6 7l5-3v6l-5 3z" fill="#c01818"/><path d="M15 2h6M20 9h-6M15 2l-1 2M20 9l1-2" stroke="#2040a0" stroke-width="1.400"/><path d="M9 22c0-6 5-9 12-8 2 3 2 6 1 8z" fill="#28b040" stroke="#222"/><path d="M10 16c3-3 7-3 11-2l-6 5z" fill="#d81818"/></svg></span>
    <i class="grip"></i>
    <span class="b more"><svg viewBox="0 0 24 24"><g fill="#e89060"><circle cx="3" cy="4" r="2"/><circle cx="11" cy="4" r="2"/><circle cx="19" cy="4" r="2"/><circle cx="3" cy="12" r="2"/><circle cx="11" cy="12" r="2"/><circle cx="19" cy="12" r="2"/><circle cx="3" cy="20" r="2"/><circle cx="11" cy="20" r="2"/><circle cx="19" cy="20" r="2"/></g><path d="M3 4h18M3 12h18M3 20h18" stroke="#e89060" stroke-width="1.300"/></svg></span>
  </div>

  <footer class="status">
    <span class="status-text">选定一个元素</span>
    <span class="status-box"><svg viewBox="0 0 24 24"><circle cx="12" cy="11" r="9" fill="#eee" stroke="#999" stroke-width="1.600"/><path d="M12 5v7M8 18l8 4" stroke="#888" stroke-width="2"/></svg></span>
  </footer>
</div>

<div class="desk-gap"></div>

<div class="taskbar">
  <span class="tk first"><svg viewBox="0 0 24 24"><path d="M3 5.500l7.500-1v7H3zM11.500 4.300L21 3v8.500h-9.500zM3 12.500h7.500v7l-7.500-1zM11.500 12.500H21V21l-9.500-1.300z" fill="#fff"/></svg></span>
  <span class="tk first"><svg viewBox="0 0 24 24"><circle cx="14" cy="9.500" r="7" fill="none" stroke="#fff" stroke-width="2"/><path d="M9 14.500L2.500 21.500" stroke="#fff" stroke-width="2.200"/></svg></span>
  <span class="tk gapl"><svg viewBox="0 0 24 24"><path d="M12 1a11 11 0 0 0-11 11c0 6 5 11 10 11 3 0 5-1 7-2-6 1-10-2-10-7 0-3 2-5 5-5s5 1 5 3c0 1-1 2-3 2 2 1 9 2 9-4C23 5 18 1 12 1z" fill="#1a8ee0"/><path d="M12 1C7 1 3 4 1 9c3-4 8-5 12-3 4 1 5 4 5 5 0 2-1 2-3 2 3 2 8 1 8-2C23 5 18 1 12 1z" fill="#44d0a0"/></svg></span>
  <span class="tk"><svg viewBox="0 0 24 24"><ellipse cx="11" cy="9" rx="10" ry="6" fill="#f0e4e4" transform="rotate(-22 11 9)"/><path d="M2 13c5 2 13-2 17-7-1 7-10 11-17 7z" fill="#c04060"/><circle cx="9" cy="19" r="2.300" fill="none" stroke="#30a8e8" stroke-width="1.500"/><circle cx="17" cy="19" r="2.300" fill="none" stroke="#30a8e8" stroke-width="1.500"/><path d="M10 17l3-7M16 17l-3-7" stroke="#30a8e8" stroke-width="1.500"/></svg></span>
  <span class="tk"><svg viewBox="0 0 24 24"><rect x="4" y="1" width="16" height="22" fill="#5a6c7a"/><rect x="5" y="2" width="14" height="5" fill="#4cd0e8"/><path d="M6 9h3v3H6zM10.500 9h3v3h-3zM15 9h3v3h-3zM6 13.500h3v3H6zM10.500 13.500h3v3h-3zM15 13.500h3v7h-3zM6 18h3v3H6zM10.500 18h3v3h-3z" fill="#e4eef4"/></svg></span>
  <span class="tk"><svg viewBox="0 0 24 24"><path d="M1 9L12 1l11 8v13H1z" fill="#28a0e0"/><path d="M1 9l11 8 11-8v1L12 13 1 10z" fill="#fff"/><path d="M1 22V10l8 6 3 2 3-2 8-6v12z" fill="#30b4ec"/></svg></span>
  <span class="tk"><svg viewBox="0 0 24 24"><circle cx="12" cy="12" r="11.500" fill="#e8453c"/><path d="M12 12L22 6a11.500 11.500 0 0 1-9 17.500z" fill="#fbc116"/><path d="M12 12l1 11.500A11.500 11.500 0 0 1 2 6z" fill="#2ba24c"/><circle cx="12" cy="12" r="5.500" fill="#fff"/><circle cx="12" cy="12" r="4.200" fill="#3f86f4"/></svg></span>
  <span class="tk"><svg viewBox="0 0 24 24"><path d="M1 3h8l2 3h12v17H1z" fill="#f0c848"/><path d="M1 8h22v15H1z" fill="#fbe07a"/><path d="M7 22v-6h10v6h-3v-3h-4v3z" fill="#2f93d8"/></svg></span>
  <span class="tk"><svg viewBox="0 0 24 24"><rect x="0" y="0" width="24" height="24" rx="4" fill="#3c8ef2"/><path d="M4 6c3 1 5 3 7 6 0-4 3-7 9-8-2 3-2 6-3 9-1 4-4 7-8 7l2-4C8 15 5 11 4 6z" fill="#fff"/></svg></span>
  <span class="tk active"><svg viewBox="0 0 24 24"><use href="#cat"/></svg></span>

  <div class="tray">
    <span class="t"><svg viewBox="0 0 16 16"><path d="M2 11l6-6 6 6" fill="none" stroke="#ddd" stroke-width="1.400"/></svg></span>
    <span class="t"><svg viewBox="0 0 16 16"><path d="M5 13V3h4.500a2.800 2.800 0 0 1 0 5.800H5M1 3V1h2M15 3V1h-2M1 11v4h2M15 13v2h-2" fill="none" stroke="#ccc"/></svg></span>
    <span class="t"><svg viewBox="0 0 16 16"><path d="M5 1h5v3H5zM3.500 4h8v8l-2 3h-6z" fill="none" stroke="#ddd"/></svg></span>
    <span class="t"><svg viewBox="0 0 16 22"><rect x="1" y="1" width="14" height="20" rx="6" fill="#0a78e8"/><path d="M4.500 7l7 7-3.500 3.500v-13L11.500 8l-7 7" fill="none" stroke="#fff" stroke-width="1.200"/></svg></span>
    <span class="t"><svg viewBox="0 0 18 16"><path d="M2 6h3l4-4v12l-4-4H2z" fill="none" stroke="#bbb"/><path d="M12 6l4 4M16 6l-4 4" stroke="#ccc" stroke-width="1.200"/></svg></span>
    <span class="t"><svg viewBox="0 0 20 16"><rect x="6" y="4" width="13" height="9" rx="1" fill="none" stroke="#ccc"/><rect x="8" y="6" width="5" height="5" fill="#ddd"/><path d="M1 4l4 2-2 3zM3 7v6" stroke="#ddd" fill="#ddd"/></svg></span>
    <span class="t"><svg viewBox="0 0 16 16"><path d="M1 14A13 13 0 0 1 14 1M4 14a10 10 0 0 1 10-10M7 14a7 7 0 0 1 7-7" fill="none" stroke="#666" stroke-width="1.100"/><circle cx="13" cy="13" r="1.600" fill="#ddd"/></svg></span>
    <span class="t"><svg viewBox="0 0 16 16"><path d="M5 1h6v4H5z" fill="#aaa"/><rect x="2" y="5" width="12" height="9" rx="2" fill="#aaa"/><circle cx="8" cy="9" r="1.600" fill="#eee"/></svg></span>
    <span class="t w-pen"><svg viewBox="0 0 18 18"><path d="M5 16l4-13c1-2 3-1 2 1L8 13c-1 2-3 1-3 0l2-6" fill="none" stroke="#ddd" stroke-width="1.200"/><path d="M11 8l5 1" stroke="#ddd"/></svg></span>
    <span class="t w-key"><svg class="kbd" viewBox="0 0 24 14"><rect x=".5" y=".5" width="23" height="13" rx="1" fill="none" stroke="#ccc"/><path d="M3 4h18M3 7h18" stroke="#ccc" stroke-dasharray="1.500 1"/><path d="M6 10.500h12" stroke="#ccc"/></svg></span>
    <span class="t w-zh">中</span>
    <span class="clock"><span>7:45</span><span>2024-10-26</span></span>
    <span class="t w-vid"><svg viewBox="0 0 16 16"><rect x=".5" y="1.500" width="15" height="13" fill="none" stroke="#ddd"/><path d="M6 5l5 3-5 3z" fill="#fff"/></svg></span>
    <span class="t w-not"><svg class="note" viewBox="0 0 18 18"><path d="M1 1.500h15v11H9l-3 3v-3H1z" fill="none" stroke="#ddd"/><circle cx="14" cy="13" r="2" fill="none" stroke="#ddd"/></svg></span>
  </div>
</div>

<div class="circle-badge"><span>0</span></div>
<div class="scroll-track"><div class="green-mark"></div></div>

<div class="caption">
  <p>老司机对汽车CATIA刚入行或者</p>
  <p>入行不久的小伙伴一点自己的拙见</p>
</div>
</body>
</html>
```

FILE: styles.css
```css
* { box-sizing: border-box; }
html, body { margin: 0; padding: 0; }
body {
  width: 1920px; height: 1080px; overflow: hidden; position: relative;
  display: flex; flex-direction: column;
  font-family: "Noto Sans CJK SC", "Noto Sans", sans-serif;
  background: linear-gradient(180deg, #3a80c4 0, #4f94c6 200px, #a6c8cc 400px, #dfe0cc 520px, #dcdcc8 675px, #3a5a60 700px, #7ea8b0 730px, #4a6a70 765px, #dcdcc8 790px, #d4d8c4 900px, #7ec0b8 980px, #2f9a9a 1040px);
}
.defs { position: absolute; }
i { display: block; font-style: normal; }

.window {
  margin-left: 8px; width: 1905px; height: 1032px; flex: none;
  display: flex; flex-direction: column;
  background: #dcdcf6;
  box-shadow: -1px 0 0 #8a8468, 1px 0 0 #7a7460, 0 1px 0 #6e6a58;
}
.desk-gap { height: 8px; flex: none; background: linear-gradient(90deg, #2a8a90, #1c4a4c 20%, #2d4a46 50%, #1a7076 100%); }

.titlebar {
  height: 30px; flex: none; display: flex; align-items: center; padding-left: 8px;
  background: #5c3a06; color: #e2ddd2; border-bottom: 1px solid #a08a68;
}
.title-icon { width: 16px; height: 16px; }
.title-text { margin-left: 5px; font: 12.500px "Noto Sans", sans-serif; white-space: nowrap; }
.win-btns { margin-left: auto; display: flex; align-items: center; gap: 29px; margin-right: 15px; }
.win-btns svg { width: 16px; height: 16px; display: block; }

.menubar {
  height: 20px; flex: none; display: flex; align-items: center; background: #dcdcf6;
  font-size: 12px; color: #222;
}
.menu-start { display: flex; align-items: center; height: 20px; margin-left: 5px; }
.menu-logo { width: 16px; height: 15px; flex: none; }
.start-label { width: 43px; height: 20px; background: #fdf8cf; line-height: 18px; padding-left: 1px; }
.menu-item { width: 42px; padding-left: 1px; line-height: 18px; }
.mdi-btns { margin-left: auto; width: 57px; height: 20px; background: #eeeef9; display: flex; align-items: center; justify-content: space-around; }
.mdi-btns svg { width: 14px; height: 14px; }

.toolbar {
  height: 37px; flex: none; display: flex; align-items: center;
  background: linear-gradient(180deg, #fff 0, #fff 4px, #dcdcf6 9px, #dcdcf6 30px, #a9a9b8 33px, #777 37px);
}
.top-bar { padding-left: 7px; }
.bottom-bar {
  padding-left: 7px;
  background: linear-gradient(180deg, #fff 0, #fff 6px, #dcdcf6 12px, #dcdcf6 30px, #a9a9b8 33px, #777 37px);
}
.grip {
  width: 19px; height: 27px; flex: none; position: relative; align-self: flex-start; margin-top: 4px;
}
.grip::before { content: ""; position: absolute; left: 10px; top: 0; width: 3px; height: 16px; background: #eee; border: 1px solid #c8c8d8; border-radius: 1px; }
.grip.first { width: 10px; }
.grip.first::before { left: 0; }

.combo {
  width: 69px; height: 24px; flex: none; margin-right: 3px; display: flex; align-items: center;
  background: #fff; border: 1px solid #8a8a90; font-size: 12px; color: #222; padding: 1px;
}
.combo .val { background: #d8f8d8; width: 50px; height: 20px; line-height: 19px; padding-left: 2px; white-space: nowrap; overflow: hidden; flex: none; }
.chev { width: 9px; height: 6px; margin-left: 5px; flex: none; }
.combo.off { border-color: #e8e8f2; color: #aaa; }
.combo.off .val { background: none; width: 30px; }
.combo.off .chev { margin-left: 26px; }
.combo.small { width: 44px; }
.combo.small .val { width: 24px; padding-left: 4px; font-size: 16px; }
.combo.small .chev { margin-left: 7px; }

.b { width: 28px; height: 28px; flex: none; display: flex; align-items: center; justify-content: center; position: relative; }
.b svg { width: 24px; height: 24px; display: block; overflow: visible; flex: none; }
.b.narrow { width: 22px; }
.b.more::after { content: ""; position: absolute; right: -1px; bottom: 0; border: 4px solid transparent; border-top: 5px solid #000; border-bottom: 0; }
.graybox svg { background: #e8e8ee; }

.main { flex: 1; display: flex; min-height: 0; }
.viewport {
  flex: 1; position: relative; overflow: hidden; border-left: 1px solid #dcdcf6;
  background: linear-gradient(180deg, #2a2760 0%, #3c3969 47%, #413e6d 67%, #b6b4c9 100%);
}
.tree { position: absolute; left: 3px; top: 1px; color: #fff; font-family: "Noto Sans", sans-serif; }
.tree-root { display: flex; align-items: flex-start; }
.root-icon { width: 33px; height: 36px; flex: none; margin-top: 3px; overflow: visible; }
.root-label { background: #f07c10; border-radius: 2px; height: 30px; line-height: 30px; padding: 0 3px; font-size: 20px; white-space: nowrap; }
.tree-child { display: flex; align-items: flex-end; height: 30px; margin-left: 8px; margin-top: -1px; font-size: 20.500px; }
.branch { width: 16px; height: 27px; border-left: 2px solid #fff; border-bottom: 2px solid #fff; margin-bottom: 5px; flex: none; }
.child-label { margin-left: 1px; line-height: 30px; height: 30px; }

.gizmo { position: absolute; left: 1720px; top: 13px; width: 95px; height: 115px; }
.giz-t { fill: #e8d858; font: 14px "Noto Sans", sans-serif; }
.axis { position: absolute; left: 1815px; top: 828px; width: 50px; height: 45px; overflow: visible; }
.axis-t { fill: #e8e8f0; font: 14px "Noto Sans", sans-serif; }
.pointer { position: absolute; left: 1356px; top: 203px; width: 14px; height: 22px; }

.float { position: absolute; box-shadow: 0 1px 2px rgba(30,20,60,.4); }
.ft-title { height: 31px; background: #5c3a10; position: relative; overflow: hidden; color: #ddd; font-size: 12px; line-height: 30px; padding-left: 8px; white-space: nowrap; }
.ft-x { position: absolute; right: 1px; top: 8px; width: 19px; height: 19px; background: #cf3c52; color: #fff; font: bold 10px/18px "Liberation Sans", sans-serif; text-align: center; }
.ft-body { display: flex; flex-direction: column; padding: 5px 0 2px 4px; background: linear-gradient(90deg, #dcdcf6 0, #dcdcf6 80%, #9a98b4 100%); }
.ft-body.row { flex-direction: row; background: linear-gradient(180deg, #fff 0, #dcdcf6 30%, #dcdcf6 75%, #a09eb4 100%); padding: 3px 0 2px 5px; height: 33px; }
.ft-a { left: 1302px; top: 284px; width: 62px; }
.ft-a .ft-title { padding-left: 9px; }
.ft-b { left: 1431px; top: 104px; width: 34px; height: 343px; }
.ft-b .ft-body { height: 312px; }
.ft-c { left: 1510px; top: 106px; width: 35px; height: 315px; }
.ft-c .ft-body { height: 284px; }
.ft-d { left: 1618px; top: 121px; width: 34px; height: 174px; }
.ft-d .ft-body { height: 143px; }
.ft-e { left: 1555px; top: 333px; width: 34px; height: 119px; }
.ft-e .ft-body { height: 88px; }
.ic-t { font: bold 9px "Liberation Sans", sans-serif; fill: #111; }
.ic-b { font: bold 13px "Liberation Serif", serif; fill: #111; }
.ic-abc { font: 8px "Liberation Sans", sans-serif; fill: #102060; }
.ic-q { font: bold 17px "Liberation Sans", sans-serif; fill: #102060; }
.ic-f { font: italic 21px "Liberation Serif", serif; fill: #111; }
.ic-fx { font: 10px "Liberation Sans", sans-serif; fill: #111; }

.sidebar {
  width: 37px; flex: none; position: relative; padding: 2px 0 0 6px;
  background: linear-gradient(90deg, #fff 0, #fff 7px, #dcdcf6 10px, #dcdcf6 31px, #a8a8b8 35px, #8a8a98 37px);
}
.vgroup { margin-top: 4px; }
.vgroup.first { margin-top: 0; }
.vgroup.far { margin-top: 28px; }
.vgroup.near { margin-top: 6px; }
.vgrip { height: 14px; position: relative; }
.vgrip::before { content: ""; position: absolute; left: 6px; top: 6px; width: 16px; height: 3px; background: #eee; border: 1px solid #c8c8d8; }
.ds-logo { position: absolute; right: 8px; bottom: -32px; width: 40px; z-index: 2; display: flex; flex-direction: column; align-items: flex-end; }
.ds-logo svg { width: 38px; height: 21px; display: block; overflow: visible; }
.ds-d { font: italic bold 20px "Liberation Sans", sans-serif; fill: #4a2a9a; }
.ds-s { font: italic bold 17px "Liberation Sans", sans-serif; fill: #e89818; }
.ds-cat { font: italic bold 10.500px/10px "Liberation Sans", sans-serif; color: #2a2a7a; letter-spacing: .2px; }

.status {
  height: 20px; flex: none; display: flex; align-items: center; justify-content: space-between;
  background: #dcdcf6; border-top: 1px solid #8a8a96; border-bottom: 1px solid #8f8f7c; font-size: 12px; color: #444;
}
.status-text { margin-left: 3px; line-height: 16px; }
.status-box { width: 33px; height: 18px; background: #eeeef6; border-left: 1px solid #bbb; display: flex; align-items: center; justify-content: center; }
.status-box svg { width: 16px; height: 16px; }

.taskbar { height: 40px; flex: none; background: #050505; display: flex; align-items: center; color: #e4e4e4; }
.tk { width: 49px; height: 40px; flex: none; display: flex; align-items: center; justify-content: center; }
.tk svg { width: 24px; height: 24px; display: block; }
.tk.first { width: 48px; }
.tk.gapl { margin-left: 4px; }
.tk.active { background: #2a2a2a; border-bottom: 2px solid #cfd4e0; }
.tray { margin-left: auto; margin-right: 12px; display: flex; align-items: center; }
.t { width: 24px; height: 40px; flex: none; display: flex; align-items: center; justify-content: center; }
.t svg { width: 16px; height: 16px; display: block; }
.t .kbd { width: 24px; height: 14px; }
.t .note { width: 17px; height: 17px; }
.w-pen { width: 34px; }
.w-key { width: 28px; }
.w-zh { width: 26px; font-size: 15px; font-weight: 500; color: #eee; }
.w-vid { width: 42px; }
.w-not { width: 38px; }
.clock { width: 78px; flex: none; display: flex; flex-direction: column; align-items: center; font: 12px/19px "Noto Sans", sans-serif; color: #ddd; }

.circle-badge {
  position: absolute; left: 1903px; top: 957px; width: 48px; height: 48px; border-radius: 50%;
  background: #62c6de; border: 2px solid #e8f6fa; color: #cfeef4; font: 12px/44px "Noto Sans", sans-serif; padding-left: 8px;
}
.scroll-track { position: absolute; left: 1912px; top: 872px; width: 7px; height: 60px; background: #2c3a3c; border: 1px solid #889; border-radius: 4px; display: flex; align-items: flex-end; }
.green-mark { width: 100%; height: 24px; background: #3fd070; border-radius: 3px; }

.caption { position: absolute; left: 0; top: 415px; width: 1920px; text-align: center; pointer-events: none; }
.caption p {
  margin: 0; height: 122px; font-size: 83px; line-height: 122px; white-space: nowrap;
  font-family: "Noto Sans CJK SC", sans-serif; color: #ffdc00;
  -webkit-text-stroke: 11px #000; paint-order: stroke fill;
}
```
